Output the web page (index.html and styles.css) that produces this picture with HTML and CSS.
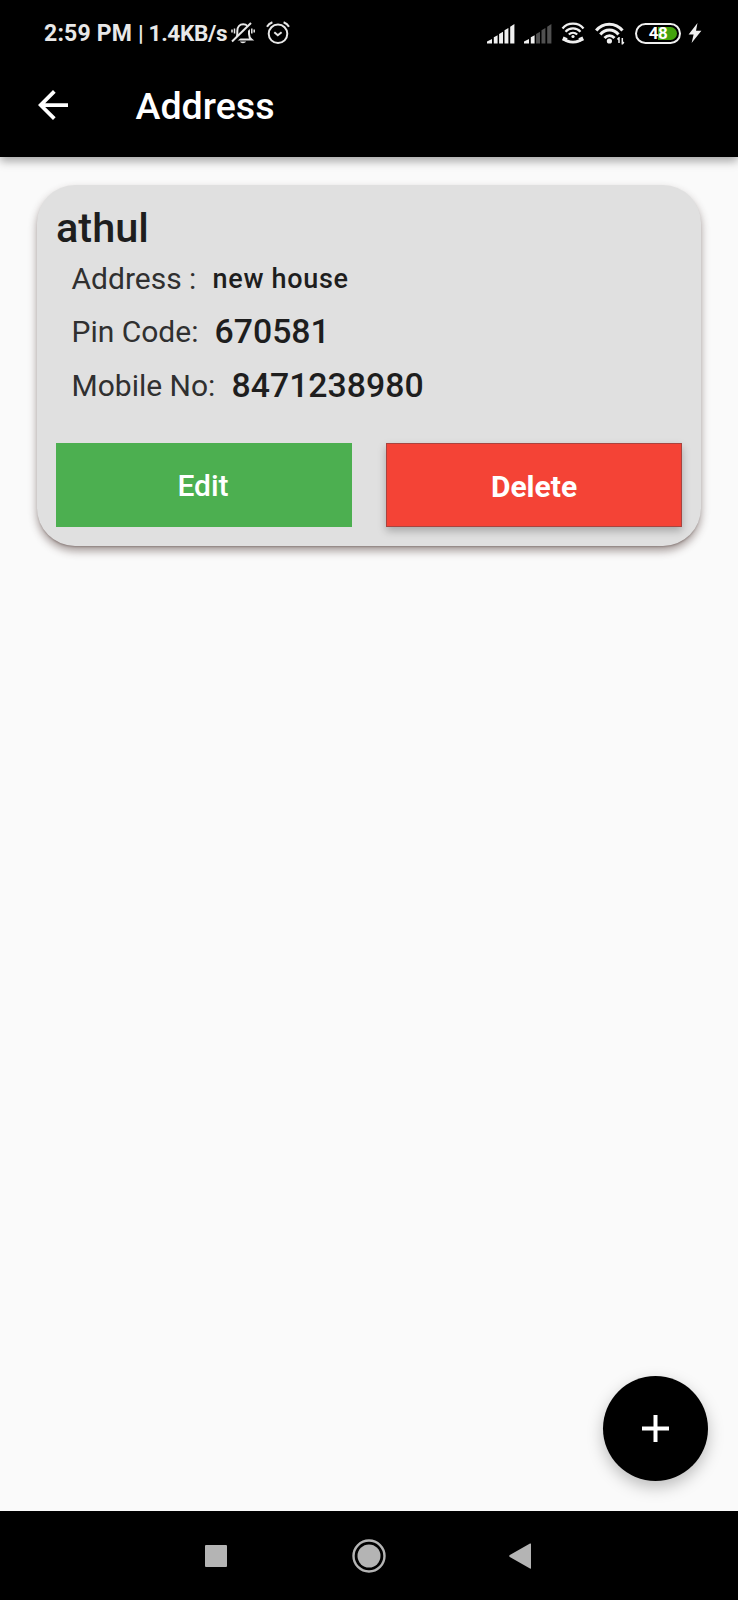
FILE: index.html
```html
<!DOCTYPE html>
<html lang="en">
<head>
  <meta charset="UTF-8">
  <meta name="viewport" content="width=device-width, initial-scale=1.0">
  <title>Address</title>
  <link rel="stylesheet" href="styles.css">
</head>
<body>

  <header class="top">
    <div class="status-bar">
      <div class="status-text"><span class="clock">2:59 PM</span> <span class="speed">| 1.4KB/s</span></div>
      <svg class="icon-bell" width="24" height="24" viewBox="0 0 24 24" fill="none" stroke="#e8e8e8" stroke-width="2">
        <path d="M4.500 18.500h16c-1.800-1.500-2.500-3-2.500-5.500V10c0-4-2.200-6.700-5.800-6.700S6.300 6 6.300 10v3c0 2.300-.4 4-1.800 5.500z"/>
        <path d="M9 20.500c.8 2.300 5 2.300 6 0z" fill="#e8e8e8" stroke="none"/>
        <path d="M20.500 3.500L2 21.500" stroke="#000" stroke-width="4"/>
        <path d="M20 2L1 20.500"/>
        <path d="M3.500 7.500v5M1 8.500v3M20.800 7.500v5M23.200 8.500v3" stroke-width="1.500"/>
      </svg>
      <svg class="icon-alarm" width="24" height="24" viewBox="0 0 24 24" fill="none" stroke="#e8e8e8" stroke-width="2">
        <circle cx="12" cy="12.800" r="9.300"/>
        <path d="M8.300 11.200l3.500 3 3.800-3M1 5.800C2.200 3.600 4 2.200 6.400 1.300M23 5.800c-1.200-2.200-3-3.600-5.400-4.500"/>
      </svg>

      <div class="status-right">
        <svg width="28" height="21" viewBox="0 0 28 21" fill="#f0f0f0">
          <path d="M0 20.500v-2l5-2.500v4.500zM6.800 20.500v-6.300l3.800-2v8.300zM12.100 20.500v-9.500l3.900-2.300v11.800zM17.500 20.500V7.300L21.400 5v15.500zM23.200 20.500V3.700L27.400 1v19.500z"/>
        </svg>
        <svg class="icon-signal2" width="28" height="21" viewBox="0 0 28 21" fill="#f0f0f0">
          <path d="M0 20.500v-2l5-2.500v4.500zM6.800 20.500v-6.300l3.800-2v8.300z"/>
          <path fill="#505050" d="M12.100 20.500v-9.500l3.900-2.300v11.800zM17.500 20.500V7.300L21.400 5v15.500zM23.200 20.500V3.700L27.400 1v19.500z"/>
        </svg>
        <svg class="icon-call" width="24" height="22" viewBox="0 0 24 22" fill="none" stroke="#f0f0f0" stroke-width="2.200">
          <path d="M1.500 6.500C6.500 0 17.500 0 22.500 6.500M4.500 9.800c4-4.500 11-4.500 15 0M7.800 12.500c2.400-2.300 6-2.300 8.400 0"/>
          <circle cx="12" cy="14.500" r="1.600" fill="#f0f0f0" stroke="none"/>
          <path d="M2.500 16.500c4.500 4.800 14.500 4.800 19 0" stroke-width="2.800"/>
          <path d="M1.800 16.300l4 1.700M22.200 16.300l-4 1.700" stroke-width="4"/>
        </svg>
        <svg class="icon-wifi" width="30" height="23" viewBox="0 0 30 23" fill="none" stroke="#f0f0f0" stroke-width="3">
          <path d="M1.200 8.500C8 0 20.500 0 27.500 8.500M5.300 12.500c5-6 13.200-6 18.200 0M9.500 16c3-3 7-3 10 0"/>
          <circle cx="14.400" cy="19" r="2.600" fill="#f0f0f0" stroke="none"/>
          <path d="M24 15v6M22.500 17.500L24 15.500M27.300 16v6.500M28.800 20l-1.500 2" stroke-width="1.500"/>
        </svg>
        <div class="battery"><span class="battery-level">48</span></div>
        <svg class="icon-bolt" width="14" height="20" viewBox="0 0 14 20" fill="#f0f0f0">
          <path d="M9.500 0L.6 11.500h5L3.600 20 13.400 7.800H8z"/>
        </svg>
      </div>
    </div>

    <div class="app-bar">
      <svg class="icon-back" width="30" height="30" viewBox="4 4 16 16" fill="#fff">
        <path d="M20 11H7.830l5.590-5.590L12 4l-8 8 8 8 1.410-1.410L7.830 13H20v-2z"/>
      </svg>
      <h1 class="title">Address</h1>
    </div>
  </header>

  <main class="content">
    <div class="card">
      <h2 class="name">athul</h2>
      <div class="row">
        <span class="label label-address">Address :</span>
        <span class="value value-small">new house</span>
      </div>
      <div class="row">
        <span class="label label-pin">Pin Code:</span>
        <span class="value">670581</span>
      </div>
      <div class="row row-mobile">
        <span class="label label-mobile">Mobile No:</span>
        <span class="value">8471238980</span>
      </div>
      <div class="actions">
        <button class="btn btn-edit">Edit</button>
        <button class="btn btn-delete">Delete</button>
      </div>
    </div>

    <button class="fab" aria-label="Add">
      <svg width="27" height="27" viewBox="0 0 27 27" stroke="#fff" stroke-width="4">
        <path d="M13.500 0v27M0 13.500h27"/>
      </svg>
    </button>
  </main>

  <nav class="nav-bar">
    <svg width="22" height="22" viewBox="0 0 22 22" fill="#b4b4b4">
      <rect width="22" height="22" rx="1"/>
    </svg>
    <svg class="nav-home" width="34" height="34" viewBox="0 0 34 34">
      <circle cx="17" cy="17" r="15.500" fill="none" stroke="#b4b4b4" stroke-width="2.400"/>
      <circle cx="17" cy="17" r="11.500" fill="#b4b4b4"/>
    </svg>
    <svg class="nav-back" width="22" height="26" viewBox="0 0 22 26" fill="#b4b4b4">
      <path d="M21 .6Q22 0 22 1v24q0 1-1 .4L.8 14q-1.200-1 0-2z"/>
    </svg>
  </nav>

</body>
</html>
```
FILE: styles.css
```css
* {
  margin: 0;
  padding: 0;
  box-sizing: border-box;
}

body {
  font-family: Roboto, sans-serif;
  background-color: #fafafa;
  color: #1e1e1e;
  height: 1600px;
  display: flex;
  flex-direction: column;
}

svg {
  display: block;
  flex-shrink: 0;
}

/* Status bar and app bar */
.top {
  height: 157px;
  background-color: #000;
  color: #fff;
  box-shadow: 0 4px 9px rgba(0, 0, 0, 0.35);
}

.status-bar {
  height: 55px;
  padding: 11px 36px 0 44px;
  display: flex;
  align-items: center;
}

.status-text {
  width: 187px;
  font-size: 23px;
  font-weight: 700;
  color: #e8e8e8;
  white-space: nowrap;
}

.clock {
  letter-spacing: 0.200px;
}

.speed {
  font-size: 22.500px;
  letter-spacing: -0.300px;
}

.icon-alarm {
  margin-left: 11px;
}

.status-right {
  margin-left: auto;
  display: flex;
  align-items: center;
}

.icon-signal2 {
  margin-left: 9px;
}

.icon-call {
  margin-left: 9px;
}

.icon-wifi {
  margin-left: 10px;
}

.battery {
  width: 46px;
  height: 21px;
  margin-left: 10px;
  padding: 2px;
  border: 2px solid #f0f0f0;
  border-radius: 11px;
}

.battery-level {
  display: block;
  height: 13px;
  border-radius: 7px;
  background: linear-gradient(to right, #000 50%, #43a30c 50%);
  font-size: 17px;
  font-weight: 700;
  line-height: 13px;
  letter-spacing: -0.500px;
  text-align: center;
}

.icon-bolt {
  margin-left: 7px;
}

.app-bar {
  height: 102px;
  padding-left: 38px;
  display: flex;
  align-items: center;
}

.icon-back {
  margin-bottom: 3px;
}

.title {
  margin-left: 67.500px;
  margin-bottom: 1px;
  font-size: 37.600px;
  font-weight: 500;
}

/* Address card */
.content {
  flex: 1;
  padding: 28px 37px;
}

.card {
  height: 361px;
  padding: 18px 19px 19px;
  background-color: #e0e0e0;
  border-radius: 38px;
  box-shadow: 0 5px 8px rgba(62, 39, 35, 0.45), 0 2px 2px -1px rgba(62, 39, 35, 0.3);
}

.name {
  font-size: 41.500px;
  font-weight: 500;
  line-height: 50px;
}

.row {
  height: 52px;
  padding-left: 15.500px;
  display: flex;
  align-items: center;
}

.row-mobile {
  height: 56px;
}

.label {
  font-size: 30px;
  color: #303030;
}

.label-address {
  width: 141px;
  margin-bottom: 2px;
}

.label-pin {
  width: 143px;
}

.label-mobile {
  width: 160px;
}

.value {
  font-size: 33.800px;
  font-weight: 500;
}

.value-small {
  font-size: 27px;
  letter-spacing: 0.700px;
}

.actions {
  margin-top: 30px;
  display: flex;
  gap: 34px;
}

.btn {
  flex: 1;
  height: 84px;
  border: none;
  font-family: inherit;
  font-size: 30px;
  color: #fff;
}

.btn-edit {
  padding-right: 2px;
  background-color: #4caf50;
  font-weight: 500;
}

.btn-delete {
  padding-top: 3px;
  border: 1px solid #a8443f;
  background-color: #f44336;
  font-weight: 700;
  box-shadow: 0 4px 8px rgba(0, 0, 0, 0.25);
}

/* Floating add button */
.fab {
  position: absolute;
  top: 1376px;
  left: 603px;
  width: 105px;
  height: 105px;
  border: none;
  border-radius: 50%;
  background-color: #000;
  display: flex;
  justify-content: center;
  align-items: center;
  box-shadow: 0 6px 16px rgba(0, 0, 0, 0.25);
}

/* Android navigation */
.nav-bar {
  height: 89px;
  padding-left: 205px;
  background-color: #000;
  display: flex;
  align-items: center;
}

.nav-home {
  margin-left: 125px;
}

.nav-back {
  margin-left: 123px;
}
```
